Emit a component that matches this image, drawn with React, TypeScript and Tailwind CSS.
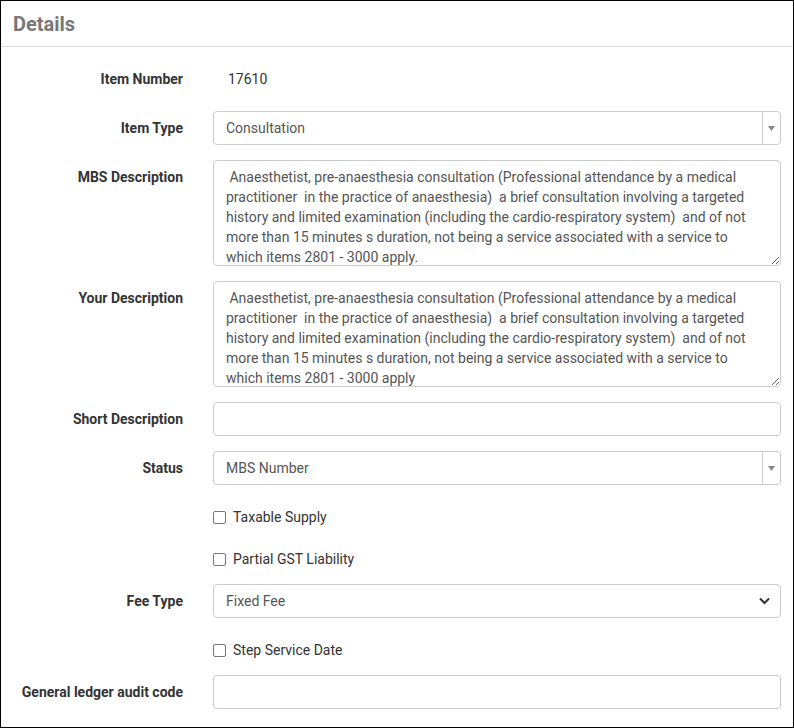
import React from "react";

const MBS_TEXT =
  " Anaesthetist, pre-anaesthesia consultation (Professional attendance by a medical practitioner  in the practice of anaesthesia)  a brief consultation involving a targeted history and limited examination (including the cardio-respiratory system)  and of not more than 15 minutes s duration, not being a service associated with a service to which items 2801 - 3000 apply.";

const YOUR_TEXT =
  " Anaesthetist, pre-anaesthesia consultation (Professional attendance by a medical practitioner  in the practice of anaesthesia)  a brief consultation involving a targeted history and limited examination (including the cardio-respiratory system)  and of not more than 15 minutes s duration, not being a service associated with a service to which items 2801 - 3000 apply";

const labelCls = "text-right text-[14px] font-bold text-[#333] pt-[7px] leading-[20px]";
const boxCls =
  "w-full h-[34px] border border-[#ccc] rounded-[4px] bg-white text-[14px] text-[#555] leading-[20px]";

const Row: React.FC<{ label?: string; children: React.ReactNode }> = ({ label, children }) => (
  <div className="grid grid-cols-[182px_1fr] gap-x-[30px] mb-[15px]">
    <div className={labelCls}>{label}</div>
    <div>{children}</div>
  </div>
);

const ChosenSelect: React.FC<{ value: string }> = ({ value }) => (
  <div className={`${boxCls} flex items-center`}>
    <span className="flex-1 pl-[12px]">{value}</span>
    <div className="w-[18px] h-full border-l border-[#ccc] flex items-center justify-center">
      <svg width="7" height="5" viewBox="0 0 7 5">
        <path d="M0 0 L7 0 L3.5 5 Z" fill="#888" />
      </svg>
    </div>
  </div>
);

const Checkbox: React.FC<{ label: string }> = ({ label }) => (
  <div className="grid grid-cols-[182px_1fr] gap-x-[30px] mb-[15px]">
    <div />
    <label className="flex items-center gap-[7px] pt-[7px] min-h-[27px] text-[14px] leading-[20px] text-[#333]">
      <span className="w-[13px] h-[13px] border border-[#767676] rounded-[2px] bg-white" />
      {label}
    </label>
  </div>
);

const Area: React.FC<{ text: string }> = ({ text }) => (
  <textarea
    defaultValue={text}
    className="block w-full h-[106px] border border-[#ccc] rounded-[4px] pl-[12px] pr-[27px] py-[6px] text-[14px] leading-[20px] text-[#555] overflow-hidden resize-y outline-none"
    style={{ fontFamily: "Roboto, 'Liberation Sans', sans-serif" }}
  />
);

export default function App() {
  return (
    <div
      className="w-[794px] h-[728px] border border-black bg-white overflow-hidden"
      style={{ fontFamily: "Roboto, 'Liberation Sans', sans-serif" }}
    >
      <div className="h-[46px] border-b border-[#ddd] px-[12px] flex items-center">
        <h2 className="text-[20px] font-bold text-[#777]">Details</h2>
      </div>
      <div className="pt-[15px] pr-[12px]">
        <Row label="Item Number">
          <div className="pt-[7px] pl-[15px] min-h-[34px] text-[14px] leading-[20px] text-[#333]">17610</div>
        </Row>
        <Row label="Item Type">
          <ChosenSelect value="Consultation" />
        </Row>
        <Row label="MBS Description">
          <Area text={MBS_TEXT} />
        </Row>
        <Row label="Your Description">
          <Area text={YOUR_TEXT} />
        </Row>
        <Row label="Short Description">
          <div className={boxCls} />
        </Row>
        <Row label="Status">
          <ChosenSelect value="MBS Number" />
        </Row>
        <Checkbox label="Taxable Supply" />
        <Checkbox label="Partial GST Liability" />
        <Row label="Fee Type">
          <div className={`${boxCls} flex items-center px-[12px]`}>
            <span className="flex-1">Fixed Fee</span>
            <svg width="11" height="8" viewBox="0 0 11 8" className="mr-[-2px]">
              <path d="M1 1.5 L5.5 6 L10 1.5" fill="none" stroke="#333" strokeWidth="2" />
            </svg>
          </div>
        </Row>
        <Checkbox label="Step Service Date" />
        <Row label="General ledger audit code">
          <div className={boxCls} />
        </Row>
      </div>
    </div>
  );
}
